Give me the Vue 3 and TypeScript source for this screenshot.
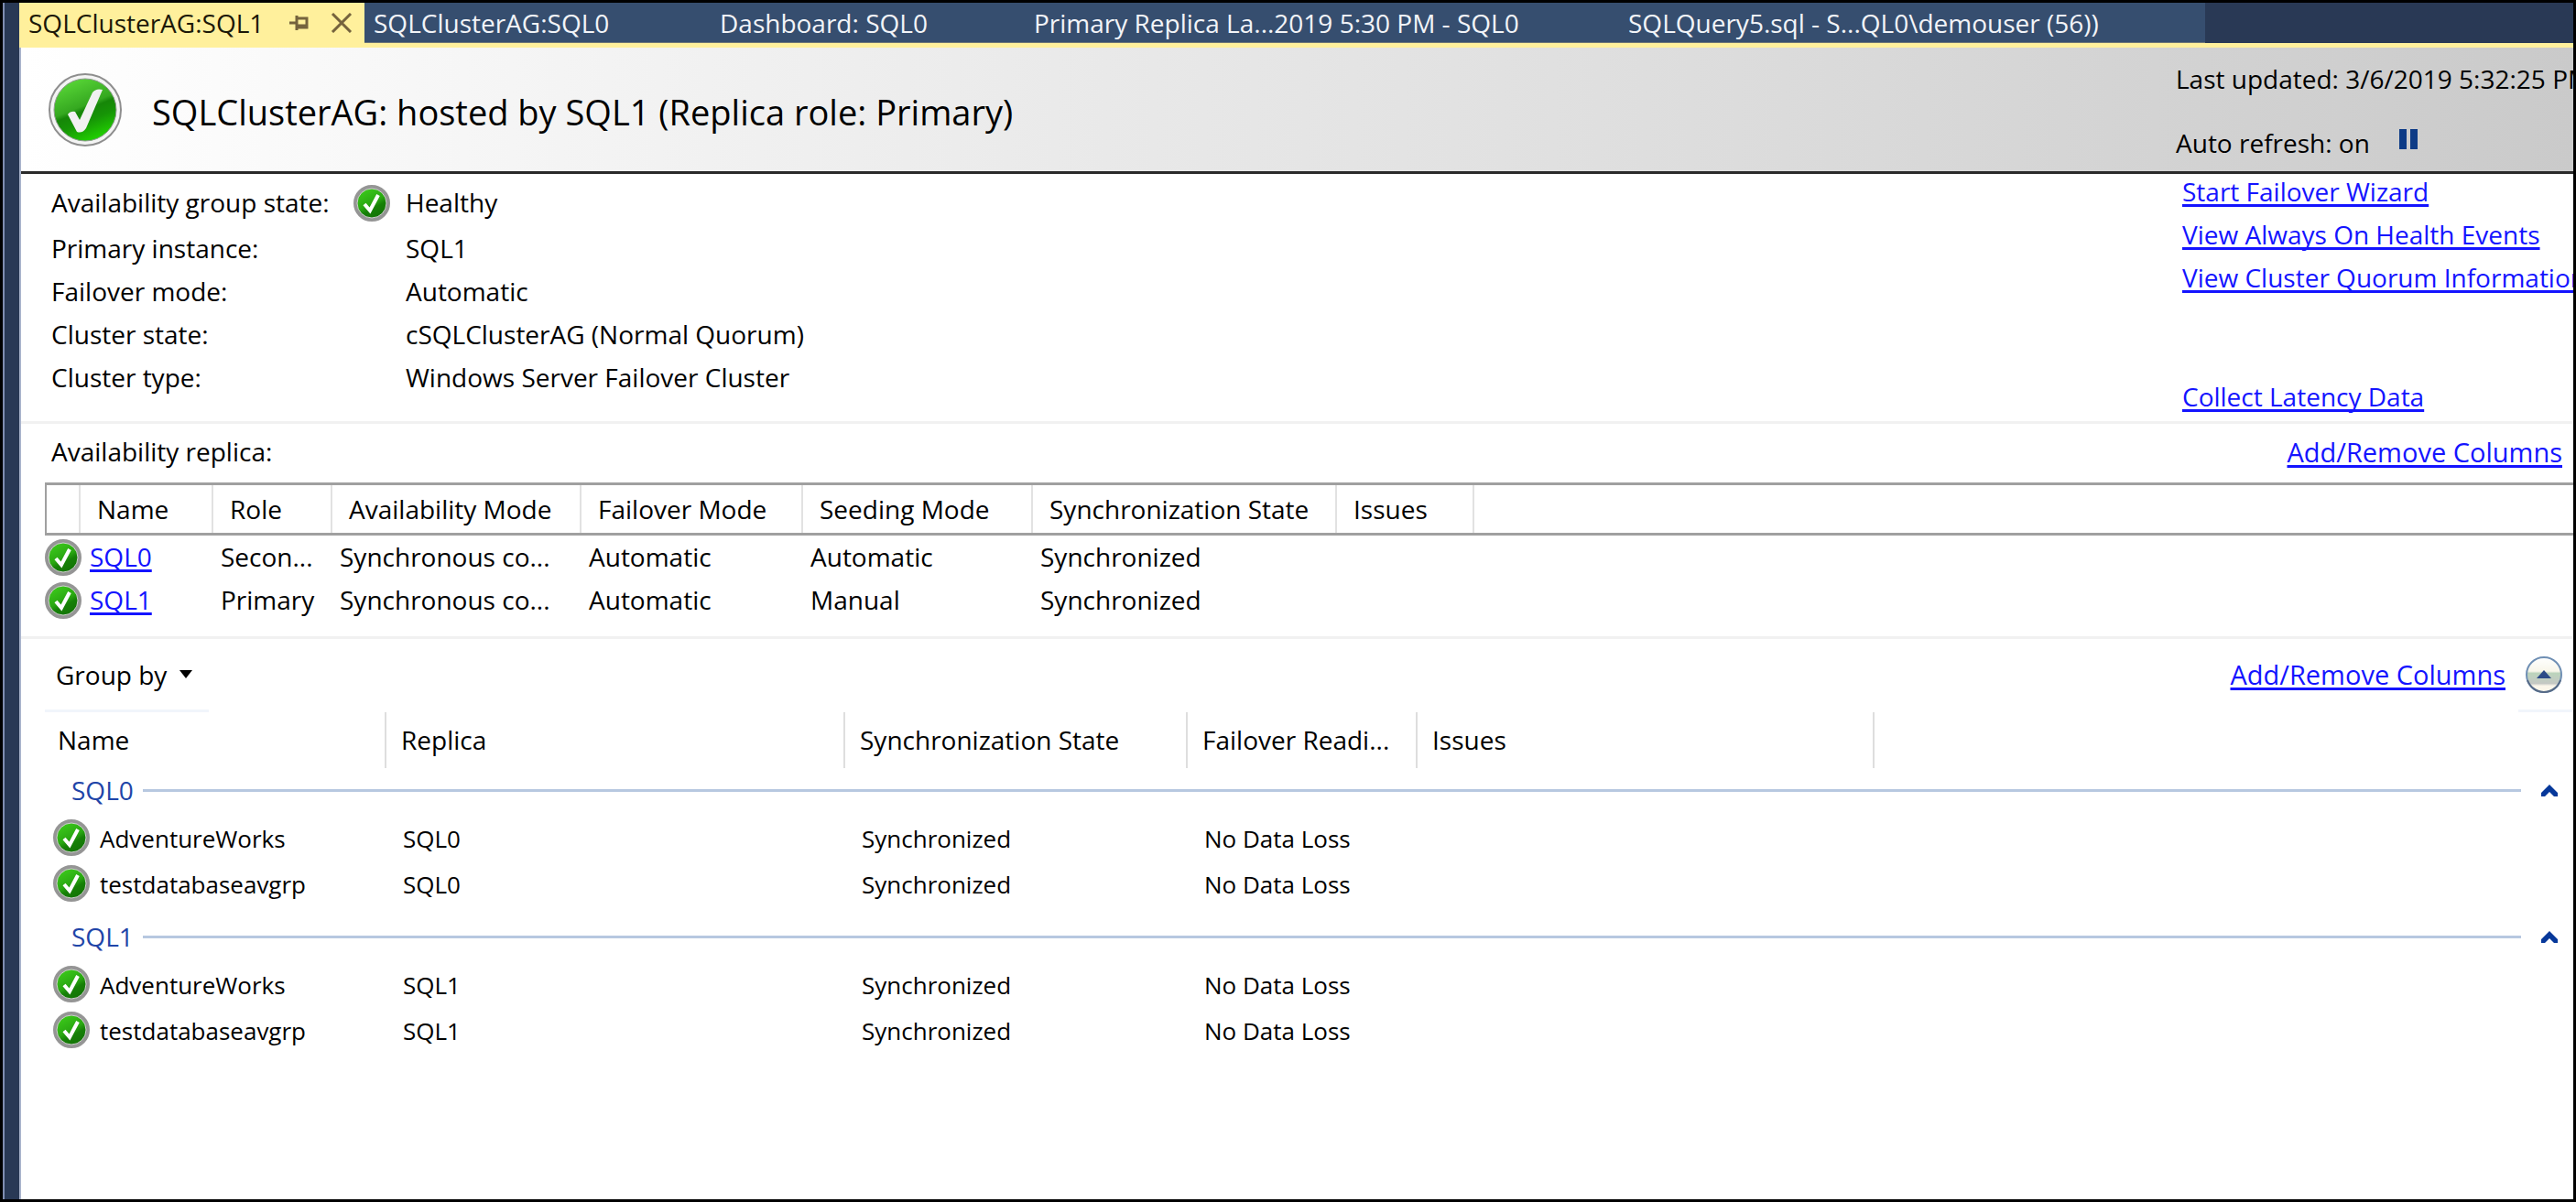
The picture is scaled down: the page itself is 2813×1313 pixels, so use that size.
<script setup lang="ts">
interface Replica {
  name: string
  role: string
  mode: string
  failover: string
  seeding: string
  sync: string
}

interface DatabaseGroup {
  replica: string
  databases: string[]
}

const tabs = [
  { title: 'SQLClusterAG:SQL0', size: 'tab-a' },
  { title: 'Dashboard: SQL0', size: 'tab-b' },
  { title: 'Primary Replica La...2019 5:30 PM - SQL0', size: 'tab-c' },
  { title: 'SQLQuery5.sql - S...QL0\\demouser (56))', size: 'tab-d' },
]

const facts = [
  { label: 'Availability group state:', value: 'Healthy', ok: true },
  { label: 'Primary instance:', value: 'SQL1', ok: false },
  { label: 'Failover mode:', value: 'Automatic', ok: false },
  { label: 'Cluster state:', value: 'cSQLClusterAG (Normal Quorum)', ok: false },
  { label: 'Cluster type:', value: 'Windows Server Failover Cluster', ok: false },
]

const links = ['Start Failover Wizard', 'View Always On Health Events', 'View Cluster Quorum Information']

const replicaColumns = ['', 'Name', 'Role', 'Availability Mode', 'Failover Mode', 'Seeding Mode', 'Synchronization State', 'Issues', '']

const replicas: Replica[] = [
  { name: 'SQL0', role: 'Secon...', mode: 'Synchronous co...', failover: 'Automatic', seeding: 'Automatic', sync: 'Synchronized' },
  { name: 'SQL1', role: 'Primary', mode: 'Synchronous co...', failover: 'Automatic', seeding: 'Manual', sync: 'Synchronized' },
]

const databaseColumns = ['Name', 'Replica', 'Synchronization State', 'Failover Readi...', 'Issues', '']

const groups: DatabaseGroup[] = [
  { replica: 'SQL0', databases: ['AdventureWorks', 'testdatabaseavgrp'] },
  { replica: 'SQL1', databases: ['AdventureWorks', 'testdatabaseavgrp'] },
]
</script>

<template>
  <div class="window">
    <svg class="defs" aria-hidden="true">
      <defs>
        <linearGradient id="green" x1="0.25" y1="0" x2="0.65" y2="1">
          <stop offset="0" stop-color="#5ad838" />
          <stop offset="0.45" stop-color="#35a820" />
          <stop offset="0.52" stop-color="#168608" />
          <stop offset="0.68" stop-color="#169406" />
          <stop offset="1" stop-color="#22d400" />
        </linearGradient>
        <linearGradient id="green-small" x1="0.2" y1="0" x2="0.75" y2="1">
          <stop offset="0" stop-color="#3fd01c" />
          <stop offset="0.5" stop-color="#2aa812" />
          <stop offset="0.65" stop-color="#168007" />
          <stop offset="1" stop-color="#127005" />
        </linearGradient>
        <linearGradient id="orb" x1="0" y1="0" x2="0" y2="1">
          <stop offset="0" stop-color="#ffffff" />
          <stop offset="0.4" stop-color="#f8f6ea" />
          <stop offset="0.46" stop-color="#bcd4bc" />
          <stop offset="0.75" stop-color="#c4c8c4" />
          <stop offset="0.82" stop-color="#fbf6ea" />
        </linearGradient>
        <symbol id="ok-large" viewBox="0 0 80 80">
          <circle cx="40" cy="40" r="39" fill="#f4f4f4" stroke="#8e8e8e" stroke-width="2" />
          <circle cx="40" cy="40" r="34" fill="url(#green)" stroke="#8f9a8f" stroke-width="1" />
          <path d="M21 45Q24 41 29 42L34 51L48 21Q52 16 59 18L41 60Q37 66 31 64Z" fill="#f1f1f1" />
        </symbol>
        <symbol id="ok-small" viewBox="0 0 40 40">
          <circle cx="20" cy="20" r="18" fill="url(#green-small)" stroke="#959595" stroke-width="4" />
          <circle cx="20" cy="20" r="16" fill="none" stroke="#cfcfcf" stroke-width="1" />
          <path d="M12 21L18 28L27 11" fill="none" stroke="#ffffff" stroke-width="4" />
        </symbol>
      </defs>
    </svg>

    <div class="rail"></div>
    <div class="workspace">
      <nav class="tabs">
        <button class="tab active" type="button">
          <span>SQLClusterAG:SQL1</span>
          <svg class="pin" viewBox="0 0 22 20"><path d="M0 10H8M8 2V18M8 5H19V15H8M8 13H19" /></svg>
          <svg class="close" viewBox="0 0 24 22"><path d="M2 1L22 21M22 1L2 21" /></svg>
        </button>
        <button v-for="tab in tabs" :key="tab.title" class="tab" :class="tab.size" type="button">{{ tab.title }}</button>
      </nav>

      <main class="page">
        <header class="banner">
          <svg class="icon-large"><use href="#ok-large" /></svg>
          <h1>SQLClusterAG: hosted by SQL1 (Replica role: Primary)</h1>
          <div class="refresh">
            <div>Last updated: 3/6/2019 5:32:25 PM</div>
            <div class="auto">
              <span>Auto refresh: on</span>
              <button class="pause" type="button" aria-label="Pause"></button>
            </div>
          </div>
        </header>

        <section class="summary">
          <dl>
            <div v-for="fact in facts" :key="fact.label" class="fact">
              <dt>{{ fact.label }}</dt>
              <dd class="mark"><svg v-if="fact.ok" class="icon"><use href="#ok-small" /></svg></dd>
              <dd>{{ fact.value }}</dd>
            </div>
          </dl>
          <div class="actions">
            <a v-for="link in links" :key="link" href="#">{{ link }}</a>
            <a class="latency" href="#">Collect Latency Data</a>
          </div>
        </section>

        <section class="replicas">
          <div class="caption">
            <h2>Availability replica:</h2>
            <a class="columns-link" href="#">Add/Remove Columns</a>
          </div>
          <table class="replica-table">
            <colgroup>
              <col class="r0" /><col class="r1" /><col class="r2" /><col class="r3" /><col class="r4" />
              <col class="r5" /><col class="r6" /><col class="r7" /><col />
            </colgroup>
            <thead>
              <tr>
                <th v-for="(column, i) in replicaColumns" :key="i">{{ column }}</th>
              </tr>
            </thead>
            <tbody>
              <tr v-for="replica in replicas" :key="replica.name">
                <td class="flush"><svg class="icon"><use href="#ok-small" /></svg></td>
                <td class="name"><a href="#">{{ replica.name }}</a></td>
                <td>{{ replica.role }}</td>
                <td>{{ replica.mode }}</td>
                <td>{{ replica.failover }}</td>
                <td>{{ replica.seeding }}</td>
                <td>{{ replica.sync }}</td>
                <td></td>
                <td></td>
              </tr>
            </tbody>
          </table>
        </section>

        <section class="databases">
          <div class="toolbar">
            <button class="group-by" type="button">
              Group by
              <svg class="caret" viewBox="0 0 14 9"><path d="M0 0H14L7 9Z" /></svg>
            </button>
            <a class="columns-link" href="#">Add/Remove Columns</a>
            <button class="collapse" type="button" aria-label="Collapse">
              <svg viewBox="0 0 40 40">
                <circle cx="20" cy="20" r="19" fill="url(#orb)" stroke="#6f8fb4" stroke-width="2" />
                <path d="M2 26A19 19 0 0 0 38 26" fill="none" stroke="#566a86" stroke-width="2" />
                <path d="M12 24L20 15L28 24Z" fill="#2b4a87" />
              </svg>
            </button>
          </div>
          <table class="database-table">
            <colgroup>
              <col class="d0" /><col class="d1" /><col class="d2" /><col class="d3" /><col class="d4" /><col />
            </colgroup>
            <thead>
              <tr>
                <th v-for="(column, i) in databaseColumns" :key="i">{{ column }}</th>
              </tr>
            </thead>
            <tbody v-for="group in groups" :key="group.replica">
              <tr>
                <th class="group" colspan="6">
                  <div class="group-row">
                    <span>{{ group.replica }}</span>
                    <i class="rule"></i>
                    <button class="fold" type="button" aria-label="Collapse group">
                      <svg viewBox="0 0 18 13"><path d="M0 13V9L9 0L18 9V13H14L9 8L4 13Z" /></svg>
                    </button>
                  </div>
                </th>
              </tr>
              <tr v-for="database in group.databases" :key="database">
                <td class="database">
                  <div class="database-name">
                    <svg class="icon"><use href="#ok-small" /></svg>
                    <span>{{ database }}</span>
                  </div>
                </td>
                <td>{{ group.replica }}</td>
                <td>Synchronized</td>
                <td>No Data Loss</td>
                <td></td>
                <td></td>
              </tr>
            </tbody>
          </table>
        </section>
      </main>
    </div>
  </div>
</template>

<style>
body {
  margin: 0;
}
</style>

<style scoped>
.window {
  box-sizing: border-box;
  min-height: 100vh;
  display: flex;
  border: 3px solid #000;
  background: #293955;
  color: #000;
  font: 28px/47px "Open Sans", "Noto Sans", sans-serif;
  white-space: nowrap;
  overflow: hidden;
}

.defs {
  position: absolute;
  width: 0;
  height: 0;
}

button {
  font: inherit;
  color: inherit;
  text-align: left;
  padding: 0;
  border: 0;
  background: none;
}

a {
  color: #1414ff;
  text-decoration: underline;
  text-decoration-thickness: 3px;
  text-underline-offset: 3px;
  text-decoration-skip-ink: none;
}

h1,
h2,
dl,
dd {
  margin: 0;
  font-weight: 400;
}

.icon {
  display: block;
  width: 40px;
  height: 40px;
}

.columns-link {
  font-size: 29px;
}

.rail {
  flex: none;
  box-sizing: border-box;
  width: 18px;
  border-left: 2px solid #7f8db0;
}

.workspace {
  flex: 1;
  min-width: 0;
  display: flex;
  flex-direction: column;
}

.tabs {
  display: flex;
  height: 44px;
  border-bottom: 5px solid #fff09c;
}

.tab {
  box-sizing: border-box;
  flex: none;
  display: flex;
  align-items: center;
  padding: 1px 0 0 10px;
  background: #364e6f;
  color: #f2f4f8;
  border-bottom: 1px solid #6d7678;
  line-height: 42px;
}

.active {
  width: 377px;
  background: #fff09c;
  border-color: #fff09c;
  color: #1c1808;
}

.active span {
  flex: 1;
}

.pin {
  width: 22px;
  height: 20px;
  margin-right: 23px;
}

.close {
  width: 24px;
  height: 22px;
  margin-right: 13px;
}

.pin path,
.close path {
  fill: none;
  stroke: #75633d;
  stroke-width: 3;
}

.tab-a {
  width: 378px;
}

.tab-b {
  width: 343px;
}

.tab-c {
  width: 649px;
}

.tab-d {
  width: 640px;
}

.page {
  flex: 1;
  border-left: 2px solid #a9b4cc;
  background: #fff;
}

.banner {
  display: flex;
  align-items: center;
  height: 135px;
  padding-left: 30px;
  border-bottom: 3px solid #2a2a2a;
  background: linear-gradient(to right, #fff, #f2f2f2 25%, #e0e0e0 60%, #cacaca);
}

.icon-large {
  width: 80px;
  height: 80px;
  margin-right: 33px;
}

h1 {
  flex: 1;
  font-size: 38px;
  padding-top: 6px;
}

.refresh {
  display: grid;
  gap: 23px;
  width: 434px;
  padding-top: 4px;
}

.auto {
  display: flex;
  gap: 32px;
}

.pause {
  box-sizing: border-box;
  width: 20px;
  height: 22px;
  margin-top: 8px;
  border: solid #0d3b86;
  border-width: 0 8px;
}

.summary {
  display: flex;
  justify-content: space-between;
  padding-left: 33px;
  border-bottom: 3px solid #f1f1f1;
}

.summary dl {
  padding: 8px 0 24px;
}

.fact {
  display: grid;
  grid-template-columns: 330px 57px auto;
}

.fact:first-child {
  margin-bottom: 3px;
}

.mark {
  display: flex;
  align-items: center;
}

.actions {
  display: flex;
  flex-direction: column;
  align-items: flex-start;
  gap: 11px;
  width: 427px;
  padding: 1px 0 9px;
  line-height: 36px;
}

.latency {
  margin-top: auto;
}

.caption {
  display: flex;
  justify-content: space-between;
  padding: 7px 12px 10px 33px;
}

h2 {
  font-size: 28px;
}

table {
  width: 100%;
  table-layout: fixed;
  border-spacing: 0;
}

th,
td {
  box-sizing: border-box;
  padding: 0;
  font-weight: 400;
  text-align: left;
}

.replicas {
  padding-bottom: 16px;
  border-bottom: 3px solid #f1f1f1;
}

.replica-table,
.database-table {
  width: calc(100% - 26px);
  margin-left: 26px;
}

.replica-table th {
  height: 58px;
  padding-left: 18px;
  border: solid #a0a0a0;
  border-width: 3px 0;
  background: linear-gradient(#e2e2e2, #e2e2e2) right / 2px 100% no-repeat;
}

.replica-table th:first-child {
  border-left: 2px solid #a0a0a0;
}

.replica-table th:last-child {
  background: none;
}

.replica-table td {
  height: 47px;
  padding-left: 8px;
}

.replica-table td.flush {
  padding-left: 0;
}

.replica-table td.name {
  padding-left: 10px;
}

.r0 {
  width: 39px;
}

.r1 {
  width: 145px;
}

.r2 {
  width: 130px;
}

.r3 {
  width: 272px;
}

.r4 {
  width: 242px;
}

.r5 {
  width: 251px;
}

.r6 {
  width: 332px;
}

.r7 {
  width: 150px;
}

.toolbar {
  display: flex;
  align-items: stretch;
  height: 80px;
  line-height: 78px;
  padding-left: 26px;
}

.toolbar a {
  margin-left: auto;
}

.group-by {
  display: flex;
  align-items: center;
  gap: 14px;
  width: 179px;
  padding-left: 12px;
  box-sizing: border-box;
  border-bottom: 3px solid #f1f5fb;
}

.caret {
  width: 14px;
  height: 9px;
}

.collapse {
  display: flex;
  align-items: center;
  box-sizing: border-box;
  width: 60px;
  margin-left: 14px;
  padding-left: 8px;
  border-bottom: 3px solid #f1f5fb;
}

.collapse svg {
  width: 40px;
  height: 40px;
}

.database-table thead th {
  height: 61px;
  padding-left: 16px;
  border-right: 2px solid #dedede;
}

.database-table thead th:first-child {
  padding-left: 14px;
}

.database-table thead th:last-child {
  border-right: 0;
}

.database-table td {
  height: 50px;
  padding: 2px 0 0 18px;
  line-height: 48px;
  font-size: 26px;
}

.database-table td.database {
  padding: 0 0 0 9px;
}

.database-name {
  display: flex;
  align-items: center;
  gap: 11px;
}

.database-name span {
  padding-top: 2px;
}

.group-row {
  display: flex;
  align-items: center;
  padding: 1px 17px 3px 29px;
  color: #1f45a8;
}

.database-table tbody + tbody .group-row {
  padding-top: 10px;
}

.rule {
  flex: 1;
  height: 3px;
  margin: 0 22px 0 10px;
  background: #b7c8e0;
}

.fold svg {
  display: block;
  width: 18px;
  height: 13px;
}

.fold path {
  fill: #06389a;
}

.d0 {
  width: 373px;
}

.d1 {
  width: 501px;
}

.d2 {
  width: 374px;
}

.d3 {
  width: 251px;
}

.d4 {
  width: 499px;
}
</style>
